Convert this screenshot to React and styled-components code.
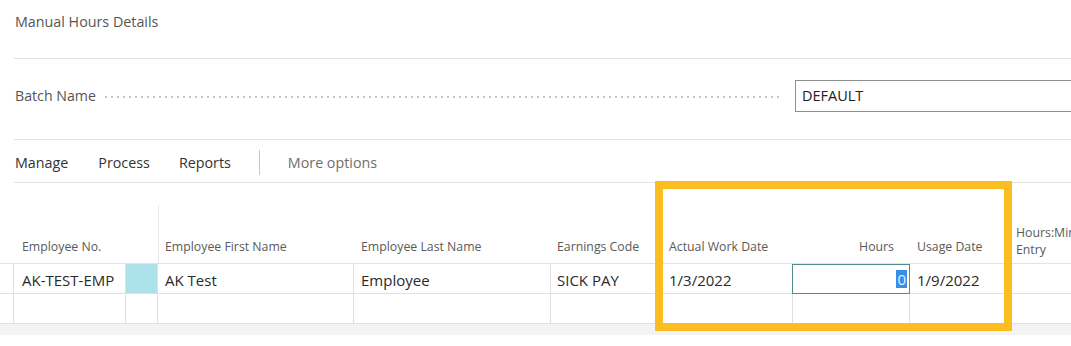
import React from "react";
import styled, { createGlobalStyle } from "styled-components";

const Global = createGlobalStyle`
  html, body { margin: 0; padding: 0; background: #fff; }
  body { font-family: "Open Sans", "Noto Sans", sans-serif; overflow: hidden; }
  * { box-sizing: border-box; }
`;

const Page = styled.div`
  width: 1071px;
  height: 346px;
  position: relative;
  overflow: hidden;
`;

const Section = styled.div`
  margin-left: 14px;
  height: ${(p) => p.$h}px;
  border-bottom: 1px solid #e3e3e3;
  display: flex;
  align-items: ${(p) => p.$align || "center"};
  padding-top: ${(p) => p.$pt || 0}px;
`;

const Title = styled.div`
  font-size: 14.3px;
  color: #555;
  margin-left: 1px;
  line-height: 18px;
`;

const FieldRow = styled.div`
  display: flex;
  align-items: center;
  width: 100%;
  margin-top: -7px;
`;

const Label = styled.div`
  font-size: 14.2px;
  color: #555;
  margin-left: 1px;
  white-space: nowrap;
`;

const Leader = styled.div`
  flex: 0 0 680px;
  margin-left: 7px;
  height: 2px;
  margin-top: 3px;
  background-image: radial-gradient(circle, #c4c4c4 0.8px, transparent 1px);
  background-size: 6px 2px;
  background-repeat: repeat-x;
`;

const Input = styled.div`
  margin-left: 12px;
  flex: 1;
  height: 32px;
  border: 1px solid #8f8f8f;
  border-right: none;
  font-size: 14.5px;
  color: #212121;
  display: flex;
  align-items: center;
  padding-left: 6px;
`;

const Toolbar = styled.div`
  display: flex;
  align-items: center;
  width: 100%;
  margin-top: 3px;
`;

const Action = styled.div`
  font-size: 14.3px;
  color: ${(p) => (p.$muted ? "#6e6e6e" : "#333")};
  margin-left: ${(p) => p.$ml}px;
`;

const Sep = styled.div`
  width: 1px;
  height: 25px;
  background: #c8c8c8;
  margin-left: 28px;
`;

const Grid = styled.div`
  display: grid;
  grid-template-columns: 14px 112px 32px 196px 197px 110px 132px 117px 98px 80px;
  grid-template-rows: 81px 30px 30px;
`;

const HeadCell = styled.div`
  display: flex;
  align-items: flex-end;
  justify-content: ${(p) => (p.$right ? "flex-end" : "flex-start")};
  padding: 0 ${(p) => (p.$right ? 16 : 0)}px ${(p) => (p.$twoLine ? 5 : 8)}px ${(p) => p.$pl ?? 8}px;
  font-size: 12.3px;
  line-height: 17px;
  color: #5a5a5a;
  border-bottom: 1px solid #e3e3e3;
  white-space: ${(p) => (p.$twoLine ? "normal" : "nowrap")};
  overflow: hidden;
  position: relative;
  ${(p) =>
    p.$divider &&
    `&::before{content:"";position:absolute;left:0;top:22px;bottom:0;width:1px;background:#e6e6e6;}`}
`;

const Cell = styled.div`
  display: flex;
  align-items: center;
  justify-content: ${(p) => (p.$right ? "flex-end" : "flex-start")};
  padding-left: ${(p) => p.$pl ?? 8}px;
  padding-top: 2px;
  font-size: 15px;
  color: #2a2a2a;
  border-bottom: 1px solid #e0e0e0;
  border-right: ${(p) => (p.$noRight ? "none" : "1px solid #e0e0e0")};
  background: ${(p) => p.$bg || "transparent"};
  white-space: nowrap;
`;

const HoursInput = styled.div`
  display: flex;
  align-items: center;
  justify-content: flex-end;
  border: 1.5px solid #4f8e8b;
  margin: 0 0 0 -1px;
  padding-right: 2px;
  font-size: 15px;
`;

const Selected = styled.span`
  background: #3a8ee8;
  color: #e3eefb;
  line-height: 18px;
  padding: 0 1px;
`;

const Band = styled.div`
  height: 11px;
  background: #f3f3f3;
`;

const Highlight = styled.div`
  position: absolute;
  left: 655px;
  top: 181px;
  width: 357px;
  height: 150px;
  border: 8px solid #fbbd1f;
  pointer-events: none;
`;

const headers = [
  { t: "", pl: 0 },
  { t: "Employee No." },
  { t: "", pl: 0 },
  { t: "Employee First Name", divider: true, pl: 7 },
  { t: "Employee Last Name", pl: 7 },
  { t: "Earnings Code", pl: 6 },
  { t: "Actual Work Date", pl: 8 },
  { t: "Hours", right: true },
  { t: "Usage Date", pl: 7 },
  { t: "Hours:Min Entry", twoLine: true, pl: 8 },
];

export default function App() {
  return (
    <>
      <Global />
      <Page>
        <Section $h={59} $align="flex-start" $pt={13}>
          <Title>Manual Hours Details</Title>
        </Section>
        <Section $h={81}>
          <FieldRow>
            <Label>Batch Name</Label>
            <Leader />
            <Input>DEFAULT</Input>
          </FieldRow>
        </Section>
        <Section $h={43}>
          <Toolbar>
            <Action $ml={1}>Manage</Action>
            <Action $ml={30}>Process</Action>
            <Action $ml={29}>Reports</Action>
            <Sep />
            <Action $ml={28} $muted>More options</Action>
          </Toolbar>
        </Section>
        <Grid>
          {headers.map((h, i) => (
            <HeadCell key={i} $right={h.right} $divider={h.divider} $twoLine={h.twoLine} $pl={h.pl}>
              {h.t}
            </HeadCell>
          ))}
          <Cell $pl={0} />
          <Cell>AK-TEST-EMP</Cell>
          <Cell $pl={0} $bg="#ade2ea" />
          <Cell $pl={7}>AK Test</Cell>
          <Cell $pl={7}>Employee</Cell>
          <Cell $pl={6}>SICK PAY</Cell>
          <Cell $pl={8}>1/3/2022</Cell>
          <HoursInput>
            <Selected>0</Selected>
          </HoursInput>
          <Cell $pl={7}>1/9/2022</Cell>
          <Cell $pl={8} $noRight />
          <Cell $pl={0} />
          <Cell />
          <Cell $pl={0} />
          <Cell />
          <Cell />
          <Cell />
          <Cell />
          <Cell />
          <Cell />
          <Cell $noRight />
        </Grid>
        <Band />
        <Highlight />
      </Page>
    </>
  );
}
